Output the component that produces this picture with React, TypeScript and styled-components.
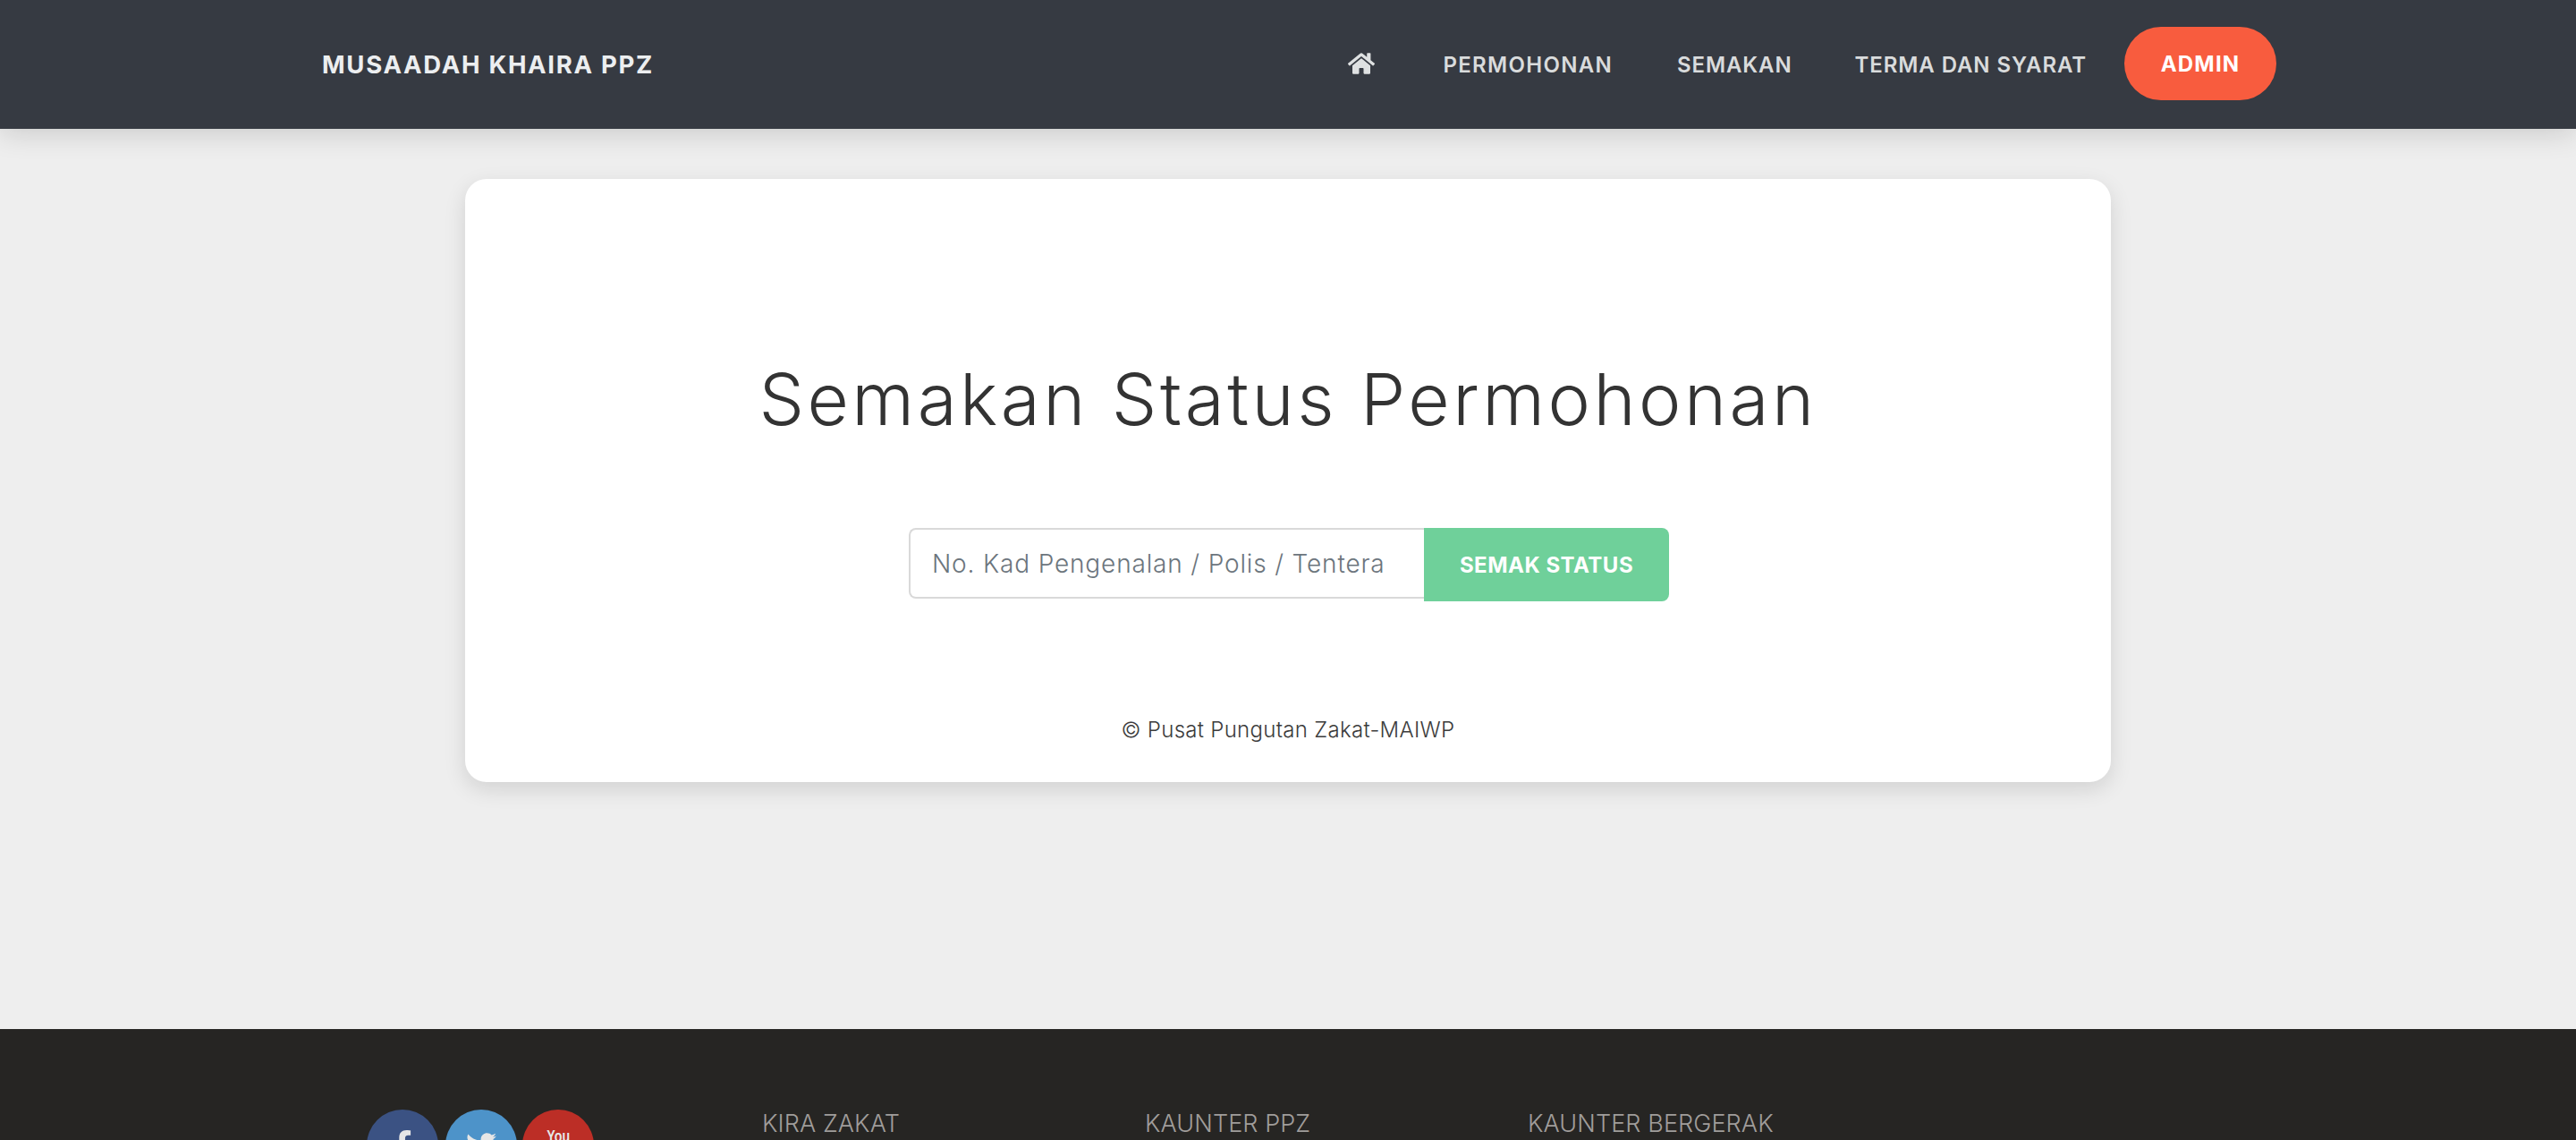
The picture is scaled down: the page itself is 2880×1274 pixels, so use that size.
import * as React from "react";
import styled, { createGlobalStyle } from "styled-components";
import { FaHome, FaFacebookF, FaTwitter } from "react-icons/fa";

const GlobalStyle = createGlobalStyle`
  html, body {
    margin: 0;
    height: 100%;
    overflow: hidden;
    background: #eeeeee;
    font-family: Inter, "Noto Sans", sans-serif;
  }
  * { box-sizing: border-box; }
`;

const Navbar = styled.nav`
  height: 144px;
  padding: 0 335px 0 360px;
  display: flex;
  align-items: center;
  justify-content: space-between;
  background: #363a42;
  box-shadow: 0 4px 30px rgba(0, 0, 0, 0.16);
  position: relative;
`;

const Brand = styled.a`
  font-size: 27.5px;
  font-weight: 700;
  letter-spacing: 1.7px;
  color: #eceef0;
  white-space: nowrap;
`;

const NavLinks = styled.div`
  display: flex;
  align-items: center;
`;

const HomeLink = styled.a`
  display: flex;
  color: #dfe1e2;
  font-size: 30px;
  margin-right: 76px;
  margin-top: -3px;
`;

const NavLink = styled.a<{ $gap: number; $spacing?: number }>`
  font-size: 24px;
  font-weight: 600;
  letter-spacing: ${(p) => p.$spacing ?? 0.9}px;
  color: #d9dbdc;
  white-space: nowrap;
  margin-right: ${(p) => p.$gap}px;
`;

const AdminButton = styled.a`
  width: 170px;
  height: 82px;
  margin-bottom: 2px;
  border-radius: 41px;
  background: #f85c3e;
  color: #ffffff;
  font-size: 24px;
  font-weight: 700;
  letter-spacing: 1.2px;
  display: flex;
  align-items: center;
  justify-content: center;
`;

const Main = styled.main`
  height: 1006px;
  padding-top: 56px;
`;

const Card = styled.section`
  width: 1840px;
  height: 674px;
  margin: 0 auto;
  background: #ffffff;
  border-radius: 24px;
  box-shadow: 0 8px 24px rgba(0, 0, 0, 0.12);
  display: flex;
  flex-direction: column;
  align-items: center;
  padding-top: 194px;
`;

const Title = styled.h1`
  margin: 0;
  font-size: 80px;
  line-height: 104px;
  font-weight: 300;
  letter-spacing: 3.5px;
  color: #333333;
  white-space: nowrap;
`;

const SearchForm = styled.form`
  margin: 92px 0 0 2px;
  display: flex;
  align-items: flex-start;
`;

const SearchInput = styled.input`
  width: 576px;
  height: 79px;
  padding: 0 24px;
  border: 2px solid #d9d9d9;
  border-right: 0;
  border-radius: 8px 0 0 8px;
  font-family: inherit;
  font-size: 28px;
  font-weight: 300;
  letter-spacing: 0.85px;
  color: #495057;
  outline: none;
  &::placeholder {
    color: #6c757d;
    opacity: 1;
  }
`;

const SearchButton = styled.button`
  width: 274px;
  height: 82px;
  border: 0;
  border-radius: 0 8px 8px 0;
  background: #6fd09a;
  color: #ffffff;
  font-family: inherit;
  font-size: 24px;
  font-weight: 700;
  letter-spacing: 0.5px;
`;

const Copyright = styled.p`
  margin: 128px 0 0;
  font-size: 24px;
  line-height: 32px;
  font-weight: 300;
  letter-spacing: 0.3px;
  color: #3c3c3c;
`;

const Footer = styled.footer`
  height: 124px;
  padding: 90px 0 0 410px;
  background: #262523;
  display: flex;
  align-items: flex-start;
  overflow: hidden;
`;

const Socials = styled.div`
  width: 442px;
  display: flex;
`;

const SocialCircle = styled.a<{ $bg: string; $gap?: number }>`
  flex: none;
  width: 80px;
  height: 80px;
  margin-right: ${(p) => p.$gap ?? 0}px;
  border-radius: 50%;
  background: ${(p) => p.$bg};
  color: #e6e6e6;
  display: flex;
  flex-direction: column;
  align-items: center;
  justify-content: center;
  font-size: 34px;
`;

const YouText = styled.span`
  font-family: "Liberation Sans", sans-serif;
  font-size: 19px;
  font-weight: 700;
  line-height: 19px;
  transform: scaleX(0.75);
`;

const TubeBox = styled.span`
  width: 44px;
  height: 20px;
  margin-top: 2px;
  border-radius: 4px;
  background: #e6e6e6;
`;

const FooterHeading = styled.h4`
  width: 428px;
  margin: 0;
  font-size: 27px;
  line-height: 32px;
  font-weight: 300;
  letter-spacing: 0.1px;
  color: #a09d9b;
  white-space: nowrap;
`;

export default function App() {
  return (
    <>
      <GlobalStyle />
      <Navbar>
        <Brand>MUSAADAH KHAIRA PPZ</Brand>
        <NavLinks>
          <HomeLink aria-label="Home">
            <FaHome />
          </HomeLink>
          <NavLink $gap={72} $spacing={1.3}>PERMOHONAN</NavLink>
          <NavLink $gap={70}>SEMAKAN</NavLink>
          <NavLink $gap={42}>TERMA DAN SYARAT</NavLink>
          <AdminButton>ADMIN</AdminButton>
        </NavLinks>
      </Navbar>
      <Main>
        <Card>
          <Title>Semakan Status Permohonan</Title>
          <SearchForm>
            <SearchInput placeholder="No. Kad Pengenalan / Polis / Tentera" />
            <SearchButton type="button">SEMAK STATUS</SearchButton>
          </SearchForm>
          <Copyright>© Pusat Pungutan Zakat-MAIWP</Copyright>
        </Card>
      </Main>
      <Footer>
        <Socials>
          <SocialCircle $bg="#3b5283" $gap={8}>
            <FaFacebookF />
          </SocialCircle>
          <SocialCircle $bg="#4d93c9" $gap={6}>
            <FaTwitter />
          </SocialCircle>
          <SocialCircle $bg="#bc2e26">
            <YouText>You</YouText>
            <TubeBox />
          </SocialCircle>
        </Socials>
        <FooterHeading>KIRA ZAKAT</FooterHeading>
        <FooterHeading>KAUNTER PPZ</FooterHeading>
        <FooterHeading>KAUNTER BERGERAK</FooterHeading>
      </Footer>
    </>
  );
}
